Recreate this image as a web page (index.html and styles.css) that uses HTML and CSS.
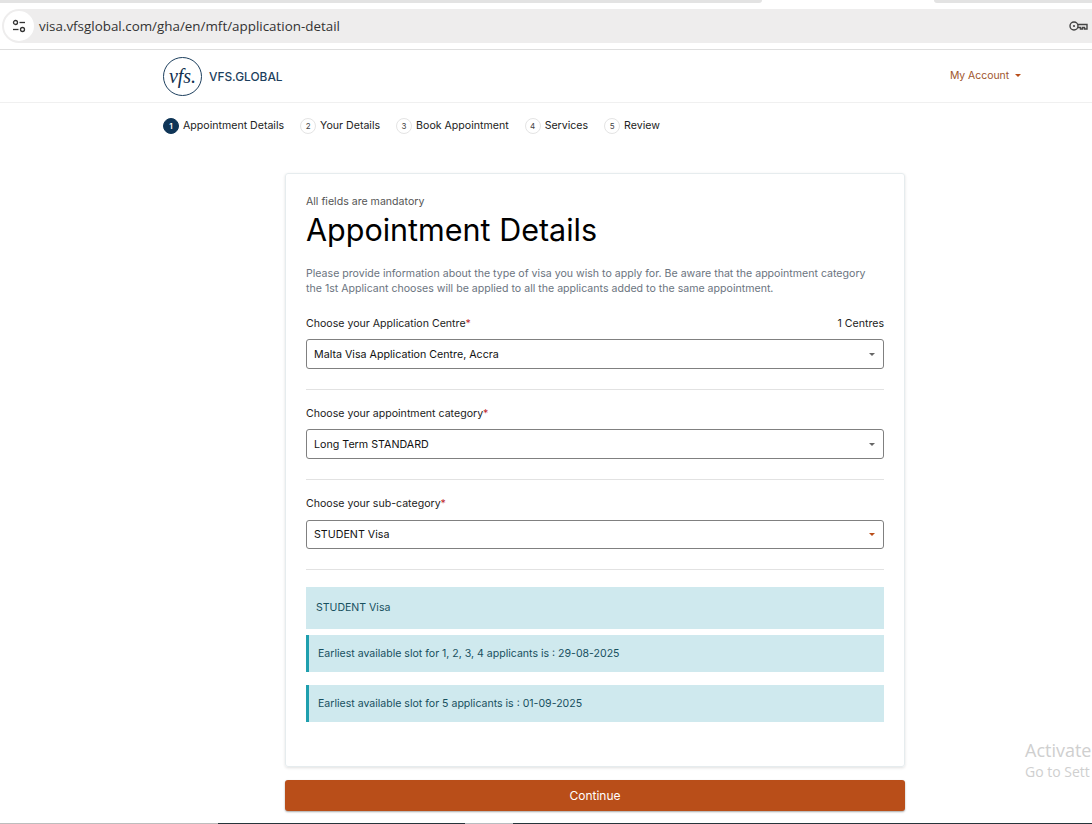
FILE: index.html
```html
<!DOCTYPE html>
<html lang="en">
<head>
  <meta charset="UTF-8">
  <title>Appointment Details</title>
  <link rel="stylesheet" href="styles.css">
</head>
<body>

  <div class="tab-strip">
    <div class="tab-rest"></div>
    <div class="tab-active"></div>
    <div class="tab-rest tab-right"></div>
  </div>

  <div class="address-bar">
    <div class="site-info">
      <svg width="14" height="14" viewBox="0 0 14 14" fill="none" stroke="#333" stroke-width="1.3">
        <circle cx="3.5" cy="3.5" r="2"/>
        <path d="M7.5 3.5H13"/>
        <circle cx="10.5" cy="10.5" r="2"/>
        <path d="M1 10.5H6.5"/>
      </svg>
    </div>
    <span class="url">visa.vfsglobal.com/gha/en/mft/application-detail</span>
    <svg class="key" width="19" height="12" viewBox="0 0 19 12" fill="none" stroke="#444" stroke-width="1.4">
      <circle cx="5" cy="6" r="4"/>
      <circle cx="5" cy="6" r="1.1" fill="#444" stroke="none"/>
      <path d="M9 4.5H18V9H15.5V7.5H13.5V9H11.5V7.5H9"/>
    </svg>
  </div>

  <header class="site-header">
    <div class="logo">
      <div class="logo-mark">vfs.</div>
      <span class="logo-text">VFS.GLOBAL</span>
    </div>
    <div class="account">My Account <span class="caret caret-brand"></span></div>
  </header>

  <ol class="steps">
    <li class="step current"><span class="step-num">1</span>Appointment Details</li>
    <li class="step"><span class="step-num">2</span>Your Details</li>
    <li class="step"><span class="step-num">3</span>Book Appointment</li>
    <li class="step"><span class="step-num">4</span>Services</li>
    <li class="step"><span class="step-num">5</span>Review</li>
  </ol>

  <main class="content">
    <section class="card">
      <p class="mandatory">All fields are mandatory</p>
      <h1>Appointment Details</h1>
      <p class="intro">Please provide information about the type of visa you wish to apply for. Be aware that the appointment category the 1st Applicant chooses will be applied to all the applicants added to the same appointment.</p>

      <div class="field">
        <div class="field-label">
          <span>Choose your Application Centre<span class="req">*</span></span>
          <span>1 Centres</span>
        </div>
        <div class="select"><span>Malta Visa Application Centre, Accra</span><span class="caret"></span></div>
      </div>

      <div class="field">
        <div class="field-label">
          <span>Choose your appointment category<span class="req">*</span></span>
        </div>
        <div class="select"><span>Long Term STANDARD</span><span class="caret"></span></div>
      </div>

      <div class="field field-last">
        <div class="field-label">
          <span>Choose your sub-category<span class="req">*</span></span>
        </div>
        <div class="select"><span>STUDENT Visa</span><span class="caret caret-brand"></span></div>
      </div>

      <div class="info">STUDENT Visa</div>
      <div class="slot">Earliest available slot for 1, 2, 3, 4 applicants is : 29-08-2025</div>
      <div class="slot">Earliest available slot for 5 applicants is : 01-09-2025</div>
    </section>

    <button class="continue">Continue</button>
  </main>

  <div class="activate">
    <div class="activate-title">Activate</div>
    <div class="activate-sub">Go to Sett</div>
  </div>

  <div class="taskbar">
    <div class="task-left"></div>
    <div class="task-dark"></div>
    <div class="task-light"></div>
    <div class="task-dark task-fill"></div>
  </div>

</body>
</html>
```

FILE: styles.css
```css
html,
body {
  height: 824px;
}

body {
  margin: 0;
  overflow: hidden;
  position: relative;
  background: #fff;
  font-family: Inter, "Liberation Sans", sans-serif;
  font-size: 11px;
  color: #1f1f1f;
}

/* browser chrome */
.tab-strip {
  display: flex;
  height: 3px;
  margin-bottom: 6px;
}

.tab-rest {
  width: 762px;
  background: #e3e3e3;
  border-bottom-right-radius: 4px;
}

.tab-active {
  width: 172px;
}

.tab-right {
  flex: 1;
  border-bottom-right-radius: 0;
  border-bottom-left-radius: 4px;
}

.address-bar {
  display: flex;
  align-items: center;
  height: 34px;
  margin-left: 2px;
  padding-right: 4px;
  background: #eeeded;
  border-radius: 17px 0 0 17px;
}

.site-info {
  display: flex;
  align-items: center;
  justify-content: center;
  width: 30px;
  height: 30px;
  margin-left: 2px;
  border-radius: 50%;
  background: #fff;
}

.url {
  flex: 1;
  margin-left: 5px;
  font-family: "Open Sans", "Liberation Sans", sans-serif;
  font-size: 13.4px;
  color: #333;
}

.key {
  display: block;
}

.site-header {
  display: flex;
  align-items: center;
  justify-content: space-between;
  height: 52px;
  margin-top: 6px;
  padding: 0 71px 0 163px;
  border-top: 1px solid #dedede;
  border-bottom: 1px solid #f0f0f0;
}

.logo {
  display: flex;
  align-items: center;
  gap: 7px;
}

.logo-mark {
  display: flex;
  align-items: center;
  justify-content: center;
  box-sizing: border-box;
  width: 39px;
  height: 39px;
  border: 1px solid #1d3f5e;
  border-radius: 50%;
  font-family: "Liberation Serif", serif;
  font-style: italic;
  font-size: 20px;
  color: #12304f;
}

.logo-text {
  font-size: 11.9px;
  font-weight: 500;
  color: #1d3f5e;
}

.account {
  padding-bottom: 2px;
  font-size: 10.4px;
  color: #a0552b;
}

.caret {
  display: inline-block;
  width: 0;
  height: 0;
  margin-left: 3px;
  vertical-align: middle;
  border-left: 3px solid transparent;
  border-right: 3px solid transparent;
  border-top: 3px solid #666;
}

.caret-brand {
  border-top-color: #b94e19;
}

/* steps */
.steps {
  display: flex;
  gap: 16px;
  margin: 0;
  padding: 15px 0 0 163px;
  list-style: none;
  font-size: 10.6px;
  line-height: 16px;
  color: #222;
}

.step {
  display: flex;
  align-items: center;
  gap: 4px;
}

.step-num {
  display: flex;
  align-items: center;
  justify-content: center;
  box-sizing: border-box;
  width: 16px;
  height: 16px;
  border: 1px solid #e4e4e4;
  border-radius: 50%;
  font-size: 8px;
  color: #444;
}

.current .step-num {
  border-color: #0f3557;
  background: #0f3557;
  color: #fff;
  font-weight: 600;
}

/* card */
.content {
  width: 620px;
  margin: 39px 0 0 285px;
}

.card {
  box-sizing: border-box;
  height: 594px;
  padding: 20px;
  border: 1px solid #e6ecee;
  border-radius: 3px;
  box-shadow: 0 1px 3px rgba(0, 0, 0, 0.12);
}

.mandatory {
  margin: 0;
  font-size: 10.6px;
  line-height: 15px;
  color: #555;
}

h1 {
  margin: 2px 0 0;
  font-size: 30.5px;
  font-weight: 400;
  line-height: 38px;
  color: #000;
}

.intro {
  margin: 17px 0 0;
  font-size: 10.6px;
  line-height: 15px;
  color: #6b7480;
}

.field {
  margin-top: 17px;
  padding-bottom: 20px;
  border-bottom: 1px solid #e2e2e2;
}

.intro + .field {
  margin-top: 21px;
}

.field-label {
  display: flex;
  justify-content: space-between;
  margin-bottom: 8px;
  font-size: 10.6px;
  line-height: 14px;
  color: #222;
}

.field-last .field-label {
  margin-bottom: 9px;
}

.select {
  display: flex;
  align-items: center;
  justify-content: space-between;
  box-sizing: border-box;
  height: 30px;
  padding: 0 8px 0 7px;
  border: 1px solid #808080;
  border-radius: 3px;
  font-size: 10.7px;
  color: #111;
}

.field-last .select {
  height: 29px;
}

.req {
  color: #c0272d;
}

.info,
.slot {
  background: #cfe9ee;
  color: #17505f;
  font-size: 10.55px;
}

.info {
  display: flex;
  align-items: center;
  height: 42px;
  margin-top: 17px;
  padding: 0 0 2px 10px;
  box-sizing: border-box;
}

.slot {
  display: flex;
  align-items: center;
  height: 37px;
  margin-top: 13px;
  padding-left: 9px;
  border-left: 3px solid #1f9fae;
}

.info + .slot {
  margin-top: 6px;
}

.continue {
  display: block;
  width: 100%;
  height: 31px;
  margin-top: 13px;
  padding: 0 0 1px;
  border: none;
  border-radius: 3px;
  background: #b94e19;
  box-shadow: 0 1px 2px rgba(0, 0, 0, 0.35);
  color: #fff;
  font-family: inherit;
  font-size: 12px;
  font-weight: 400;
}

/* windows leftovers over the page */
.activate {
  position: absolute;
  left: 1025px;
  top: 739px;
  font-family: "Open Sans", "Liberation Sans", sans-serif;
  color: #cfcfcf;
}

.activate-title {
  font-size: 18px;
  line-height: 22px;
}

.activate-sub {
  font-size: 14px;
  line-height: 22px;
}

.taskbar {
  position: absolute;
  left: 0;
  right: 0;
  bottom: 0;
  display: flex;
  height: 1px;
}

.task-left {
  width: 218px;
  background: #bdbdbd;
}

.task-dark {
  width: 247px;
  background: #27343a;
}

.task-light {
  width: 48px;
  background: #b8bdc0;
}

.task-fill {
  flex: 1;
}
```
